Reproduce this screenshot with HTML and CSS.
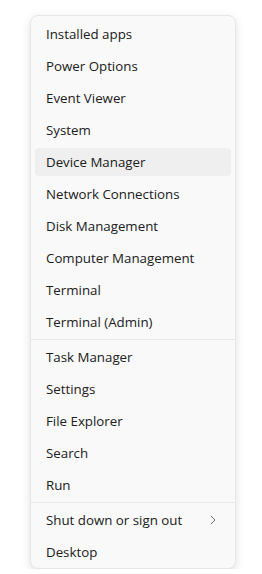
FILE: index.html
```html
<!DOCTYPE html>
<html lang="en">
<head>
<meta charset="utf-8">
<title>Quick Link Menu</title>
<link rel="stylesheet" href="styles.css">
</head>
<body>
<div class="page">
  <div class="menu">
    <div class="item">Installed apps</div>
    <div class="item">Power Options</div>
    <div class="item">Event Viewer</div>
    <div class="item">System</div>
    <div class="item hover">Device Manager</div>
    <div class="item">Network Connections</div>
    <div class="item">Disk Management</div>
    <div class="item">Computer Management</div>
    <div class="item">Terminal</div>
    <div class="item">Terminal (Admin)</div>
    <div class="sep"></div>
    <div class="item">Task Manager</div>
    <div class="item">Settings</div>
    <div class="item">File Explorer</div>
    <div class="item">Search</div>
    <div class="item">Run</div>
    <div class="sep"></div>
    <div class="item sub">
      <span>Shut down or sign out</span>
      <svg class="chev" width="6" height="10" viewBox="0 0 6 10"><path d="M1 1 L5 5 L1 9" fill="none" stroke="#6a6a6a" stroke-width="1"/></svg>
    </div>
    <div class="item">Desktop</div>
  </div>
</div>
</body>
</html>
```
FILE: styles.css
```css
html, body {
  margin: 0;
  padding: 0;
  background: #ffffff;
}
.page {
  padding: 15px 0 0 30px;
}
.menu {
  width: 206px;
  box-sizing: border-box;
  background: #f9f9f9;
  border: 1px solid #e6e6e6;
  border-radius: 8px;
  box-shadow: 0 3px 10px rgba(0, 0, 0, 0.12);
  padding: 4px 4px 2px 4px;
  display: flex;
  flex-direction: column;
  gap: 4px;
  font-family: "Segoe UI", "Open Sans", sans-serif;
  font-size: 13.3px;
  color: #202020;
}
.item {
  height: 28px;
  display: flex;
  align-items: center;
  padding: 0 15px 0 11px;
  border-radius: 4px;
  white-space: nowrap;
}
.item.hover {
  background: #efefef;
}
.item.sub {
  justify-content: space-between;
}
.chev {
  display: block;
}
.sep {
  height: 1px;
  background: #e8e8e8;
  margin: -1px -5px;
}
```
